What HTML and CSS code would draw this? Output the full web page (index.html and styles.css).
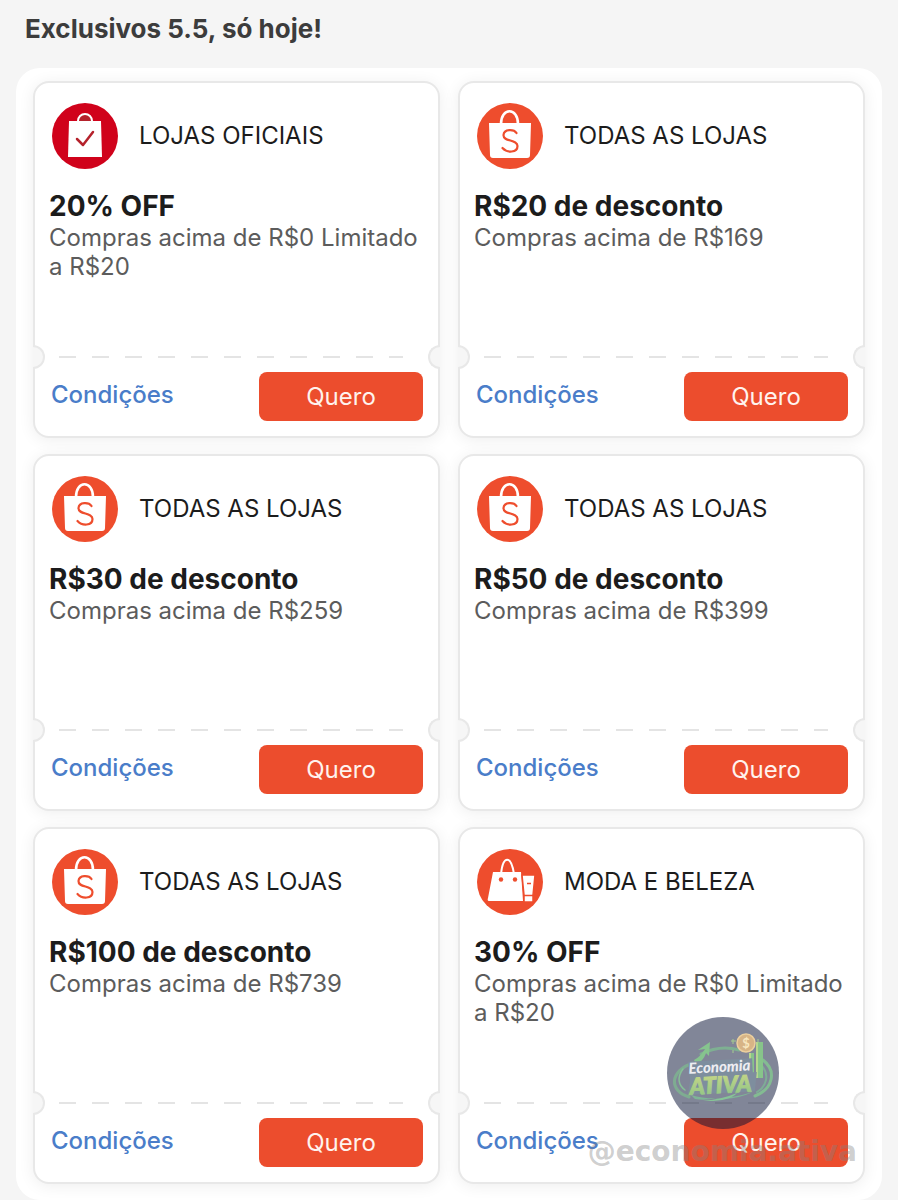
FILE: index.html
```html
<!DOCTYPE html>
<html lang="pt-BR">
  <head>
    <meta charset="UTF-8" />
    <meta name="viewport" content="width=device-width, initial-scale=1.0" />
    <title>Exclusivos 5.5</title>
    <link rel="stylesheet" href="styles.css">
  </head>
  <body>
    <!-- Icones reutilizados nos cupons -->
    <svg class="sprite" aria-hidden="true">
      <symbol id="icon-oficial" viewBox="0 0 66 66">
        <circle cx="33" cy="33" r="33" fill="#d0021b" />
        <path d="M26 19v-1a7 7 0 0 1 14 0v1" fill="#b5222c" stroke="#fff" stroke-width="2" />
        <path d="M17 18h32l1 36H16z" fill="#fff" />
        <path d="M25 36l6 6 10-13" fill="none" stroke="#b5222c" stroke-width="2.500" stroke-linecap="round" stroke-linejoin="round" />
      </symbol>
      <symbol id="icon-loja" viewBox="0 0 66 66">
        <circle cx="33" cy="33" r="33" fill="#ee4d2d" />
        <path d="M24 21C24 4 41 4 41 21" fill="none" stroke="#fff" stroke-width="2.600" />
        <path d="M12 20h42l-1 32q0 3-3 3H16q-3 0-3-3z" fill="#fff" />
        <path d="M39.500 30C37 26 27 25.500 26.500 32C26 39 40.500 36 40.500 43C40.500 50 30 50 25.500 45" fill="none" stroke="#ee4d2d" stroke-width="2.200" stroke-linecap="round" />
      </symbol>
      <symbol id="icon-moda" viewBox="0 0 66 66">
        <circle cx="33" cy="33" r="33" fill="#ee4d2d" />
        <path d="M24 25C26 6 34 6 37 25" fill="none" stroke="#fff" stroke-width="2" />
        <path d="M16 23h28l2 29H12q-2 0-1-3z" fill="#fff" />
        <circle cx="24" cy="30.500" r="2.200" fill="#ee4d2d" />
        <circle cx="38" cy="30.500" r="2.200" fill="#ee4d2d" />
        <path d="M45 26h13l-2 20v7h-9v-7z" fill="#fff" stroke="#ee4d2d" stroke-width="1.500" />
        <path d="M47 46.500h9M50 34.500h4" stroke="#ee4d2d" stroke-width="1.500" />
      </symbol>
    </svg>

    <header class="page-header">
      <h1>Exclusivos 5.5, só hoje!</h1>
    </header>

    <main class="panel">
      <article class="coupon">
        <div class="coupon-body">
          <div class="store">
            <svg class="store-icon"><use href="#icon-oficial" /></svg>
            <span>LOJAS OFICIAIS</span>
          </div>
          <h2>20% OFF</h2>
          <p>Compras acima de R$0 Limitado a R$20</p>
        </div>
        <div class="tear"></div>
        <div class="coupon-footer">
          <a href="#">Condições</a>
          <button type="button">Quero</button>
        </div>
      </article>

      <article class="coupon">
        <div class="coupon-body">
          <div class="store">
            <svg class="store-icon"><use href="#icon-loja" /></svg>
            <span>TODAS AS LOJAS</span>
          </div>
          <h2>R$20 de desconto</h2>
          <p>Compras acima de R$169</p>
        </div>
        <div class="tear"></div>
        <div class="coupon-footer">
          <a href="#">Condições</a>
          <button type="button">Quero</button>
        </div>
      </article>

      <article class="coupon">
        <div class="coupon-body">
          <div class="store">
            <svg class="store-icon"><use href="#icon-loja" /></svg>
            <span>TODAS AS LOJAS</span>
          </div>
          <h2>R$30 de desconto</h2>
          <p>Compras acima de R$259</p>
        </div>
        <div class="tear"></div>
        <div class="coupon-footer">
          <a href="#">Condições</a>
          <button type="button">Quero</button>
        </div>
      </article>

      <article class="coupon">
        <div class="coupon-body">
          <div class="store">
            <svg class="store-icon"><use href="#icon-loja" /></svg>
            <span>TODAS AS LOJAS</span>
          </div>
          <h2>R$50 de desconto</h2>
          <p>Compras acima de R$399</p>
        </div>
        <div class="tear"></div>
        <div class="coupon-footer">
          <a href="#">Condições</a>
          <button type="button">Quero</button>
        </div>
      </article>

      <article class="coupon">
        <div class="coupon-body">
          <div class="store">
            <svg class="store-icon"><use href="#icon-loja" /></svg>
            <span>TODAS AS LOJAS</span>
          </div>
          <h2>R$100 de desconto</h2>
          <p>Compras acima de R$739</p>
        </div>
        <div class="tear"></div>
        <div class="coupon-footer">
          <a href="#">Condições</a>
          <button type="button">Quero</button>
        </div>
      </article>

      <article class="coupon">
        <div class="coupon-body">
          <div class="store">
            <svg class="store-icon"><use href="#icon-moda" /></svg>
            <span>MODA E BELEZA</span>
          </div>
          <h2>30% OFF</h2>
          <p>Compras acima de R$0 Limitado a R$20</p>
        </div>
        <div class="tear"></div>
        <div class="coupon-footer">
          <a href="#">Condições</a>
          <button type="button">Quero</button>
        </div>
      </article>

      <!-- Marca d'agua -->
      <svg class="watermark-logo" viewBox="0 0 112 112">
        <defs>
          <linearGradient id="verde" x1="0" y1="0" x2="0" y2="1">
            <stop offset="0" stop-color="#a0b410" />
            <stop offset="1" stop-color="#1c8a10" />
          </linearGradient>
        </defs>
        <circle cx="56" cy="56" r="56" fill="#061033" />
        <g fill="none" stroke-linecap="round">
          <path d="M26 46C2 54 2 74 22 80" stroke="#005c26" stroke-width="3" />
          <path d="M16 52C10 60 11 68 18 73" stroke="#0f8030" stroke-width="1.500" />
          <path d="M34 37C48 30 62 30 72 33" stroke="#006428" stroke-width="3" />
          <path d="M96 43C110 54 106 72 88 79" stroke="#0a7a28" stroke-width="3" />
          <path d="M93 47C104 57 99 70 90 75" stroke="#005c30" stroke-width="2" />
        </g>
        <path d="M27 43C33 40 36 35 38 32L31 33 43 25 42 39 39 36C37 42 34 45 29 47z" fill="#108a20" />
        <path d="M75 42h5v12h-5zM82 36h5v21h-5zM89 25h7v36h-7z" fill="#128a18" />
        <path d="M89 25h2v36h-2zM82 36h2v21h-2z" fill="#70b020" />
        <path d="M24 78Q50 86 86 75Q66 84 50 81Q38 84 28 82z" fill="#006e30" />
        <path d="M36 84Q56 82 70 76Q62 85 36 84z" fill="#108a30" />
        <circle cx="79" cy="26" r="9" fill="#b06c10" stroke="#d8a040" stroke-width="1.500" />
        <text class="logo-coin" x="79" y="31" text-anchor="middle" fill="#f0d080">$</text>
        <path d="M66 22v5M64 24h5M66 33v3M91 22v4" stroke="#4c9a20" />
        <g transform="rotate(-3 54 60)">
          <path d="M22 43h64v14h4l-3 19H20l3-14z" fill="#002040" />
          <text class="logo-top" x="53" y="55" text-anchor="middle" fill="#dcdce4">Economia</text>
          <text class="logo-bottom" x="53" y="76" text-anchor="middle" fill="url(#verde)" stroke="url(#verde)" stroke-width="1">ATIVA</text>
        </g>
      </svg>
      <span class="watermark-text">@economia.ativa</span>
    </main>
  </body>
</html>
```
FILE: styles.css
```css
*,
*::before,
*::after {
  margin: 0;
  padding: 0;
  box-sizing: border-box;
}

body {
  background-color: #f5f5f5;
  font-family: Inter, "Liberation Sans", sans-serif;
  color: #1c1c1c;
}

.sprite {
  display: none;
}

.page-header {
  padding: 12px 25px 22px;
}

.page-header h1 {
  font-size: 26px;
  line-height: 34px;
  font-weight: 700;
  color: #3c3c3c;
}

/* Painel */
.panel {
  position: relative;
  display: grid;
  grid-template-columns: 1fr 1fr;
  gap: 16px 18px;
  margin: 0 16px;
  padding: 13px 17px 16px;
  background-color: #fff;
  border-radius: 24px;
}

/* Cupom */
.coupon {
  display: flex;
  flex-direction: column;
  background-color: #fff;
  border: 2px solid #e8e8e8;
  border-radius: 16px;
  box-shadow: 0 2px 16px rgba(0, 0, 0, 0.07);
}

.coupon-body {
  flex: 1;
  min-height: 273px;
  padding: 20px 12px 16px 14px;
}

.store {
  display: flex;
  align-items: center;
  gap: 21px;
  padding-left: 3px;
  margin-bottom: 20px;
  font-size: 24px;
  line-height: 30px;
}

.store-icon {
  width: 66px;
  height: 66px;
  flex-shrink: 0;
}

.coupon h2 {
  font-size: 28px;
  line-height: 34px;
  font-weight: 700;
}

.coupon p {
  font-size: 24px;
  line-height: 29px;
  color: #5c5c5c;
}

/* Linha picotada */
.tear {
  position: relative;
  height: 2px;
  margin: 0 35px 0 24px;
  background: repeating-linear-gradient(90deg, #e4e4e4 0 17px, transparent 17px 33px);
}

.tear::before,
.tear::after {
  content: "";
  position: absolute;
  top: -11px;
  width: 12px;
  height: 24px;
  background-color: #f6f6f6;
  border: 2px solid #e8e8e8;
}

.tear::before {
  left: -26px;
  border-left: none;
  border-radius: 0 12px 12px 0;
}

.tear::after {
  right: -37px;
  border-right: none;
  border-radius: 12px 0 0 12px;
}

.coupon-footer {
  display: flex;
  justify-content: space-between;
  align-items: flex-start;
  padding: 14px 15px 15px 16px;
}

.coupon-footer a {
  font-size: 24px;
  line-height: 46px;
  font-weight: 500;
  color: #4a7dc9;
  text-decoration: none;
}

.coupon-footer button {
  width: 164px;
  height: 49px;
  border: none;
  border-radius: 8px;
  background-color: #ec4d2d;
  color: #fff3ee;
  font-family: inherit;
  font-size: 24px;
  cursor: pointer;
}

/* Marca d'agua */
.watermark-logo {
  position: absolute;
  right: 103px;
  bottom: 71px;
  width: 112px;
  height: 112px;
  opacity: 0.5;
}

.logo-coin {
  font: bold 13px Lato, sans-serif;
}

.logo-top {
  font: italic 900 15px Lato, sans-serif;
}

.logo-bottom {
  font: italic 900 23px Lato, sans-serif;
}

.watermark-text {
  position: absolute;
  right: 25px;
  bottom: 33px;
  font-family: "DejaVu Sans", sans-serif;
  font-size: 28px;
  line-height: 30px;
  font-weight: bold;
  color: rgba(130, 130, 130, 0.4);
}
```
